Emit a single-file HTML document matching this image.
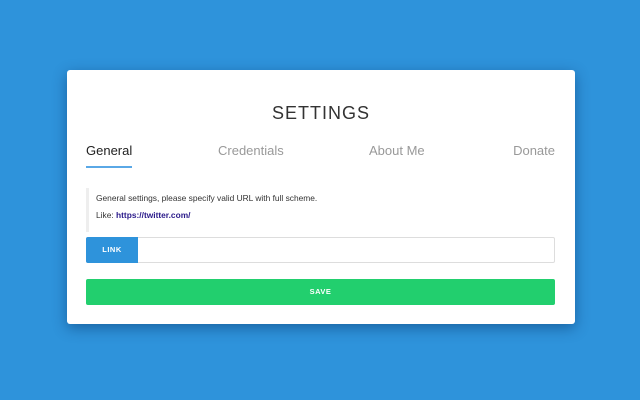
<!DOCTYPE html>
<html><head><style>
*{margin:0;padding:0;box-sizing:border-box}
body{width:640px;height:400px;background:#2e93db;font-family:"Liberation Sans",sans-serif;position:relative;overflow:hidden}
.card{position:absolute;left:67px;top:70px;width:508px;height:254px;background:#fff;border-radius:3px;box-shadow:0 4px 14px rgba(0,40,90,.45)}
.t{position:absolute;left:67px;width:508px;top:103px;text-align:center;font-size:18px;letter-spacing:1px;color:#333}
.tab{position:absolute;top:143px;font-size:13px;color:#999}
.ul{position:absolute;left:86px;top:166px;width:46px;height:2px;background:#5aa8e6}
.info{position:absolute;left:86px;top:188px;width:469px;height:44px;border-left:3px solid #eee;font-size:8.4px;color:#333;padding-left:7px}
.btn{position:absolute;font-weight:bold;font-size:7.5px;color:#fff;text-align:center;letter-spacing:.5px}
</style></head><body>
<div class="card"></div>
<div class="t">SETTINGS</div>
<div class="tab" style="left:86px;color:#222">General</div>
<div class="tab" style="left:218px">Credentials</div>
<div class="tab" style="left:369px">About Me</div>
<div class="tab" style="right:85px">Donate</div>
<div class="ul"></div>
<div class="info"><div style="margin-top:5px">General settings, please specify valid URL with full scheme.</div><div style="margin-top:7px">Like: <span style="color:#2a1a8a;font-weight:bold">https://twitter.com/</span></div></div>
<div style="position:absolute;left:86px;top:237px;width:469px;height:26px;border:1px solid #ddd;border-radius:2px"></div>
<div class="btn" style="left:86px;top:237px;width:52px;height:26px;line-height:26px;background:#2e93db;border-radius:2px 0 0 2px">LINK</div>
<div class="btn" style="left:86px;top:279px;width:469px;height:26px;line-height:26px;background:#22cf6e;border-radius:2px">SAVE</div>
</body></html>
